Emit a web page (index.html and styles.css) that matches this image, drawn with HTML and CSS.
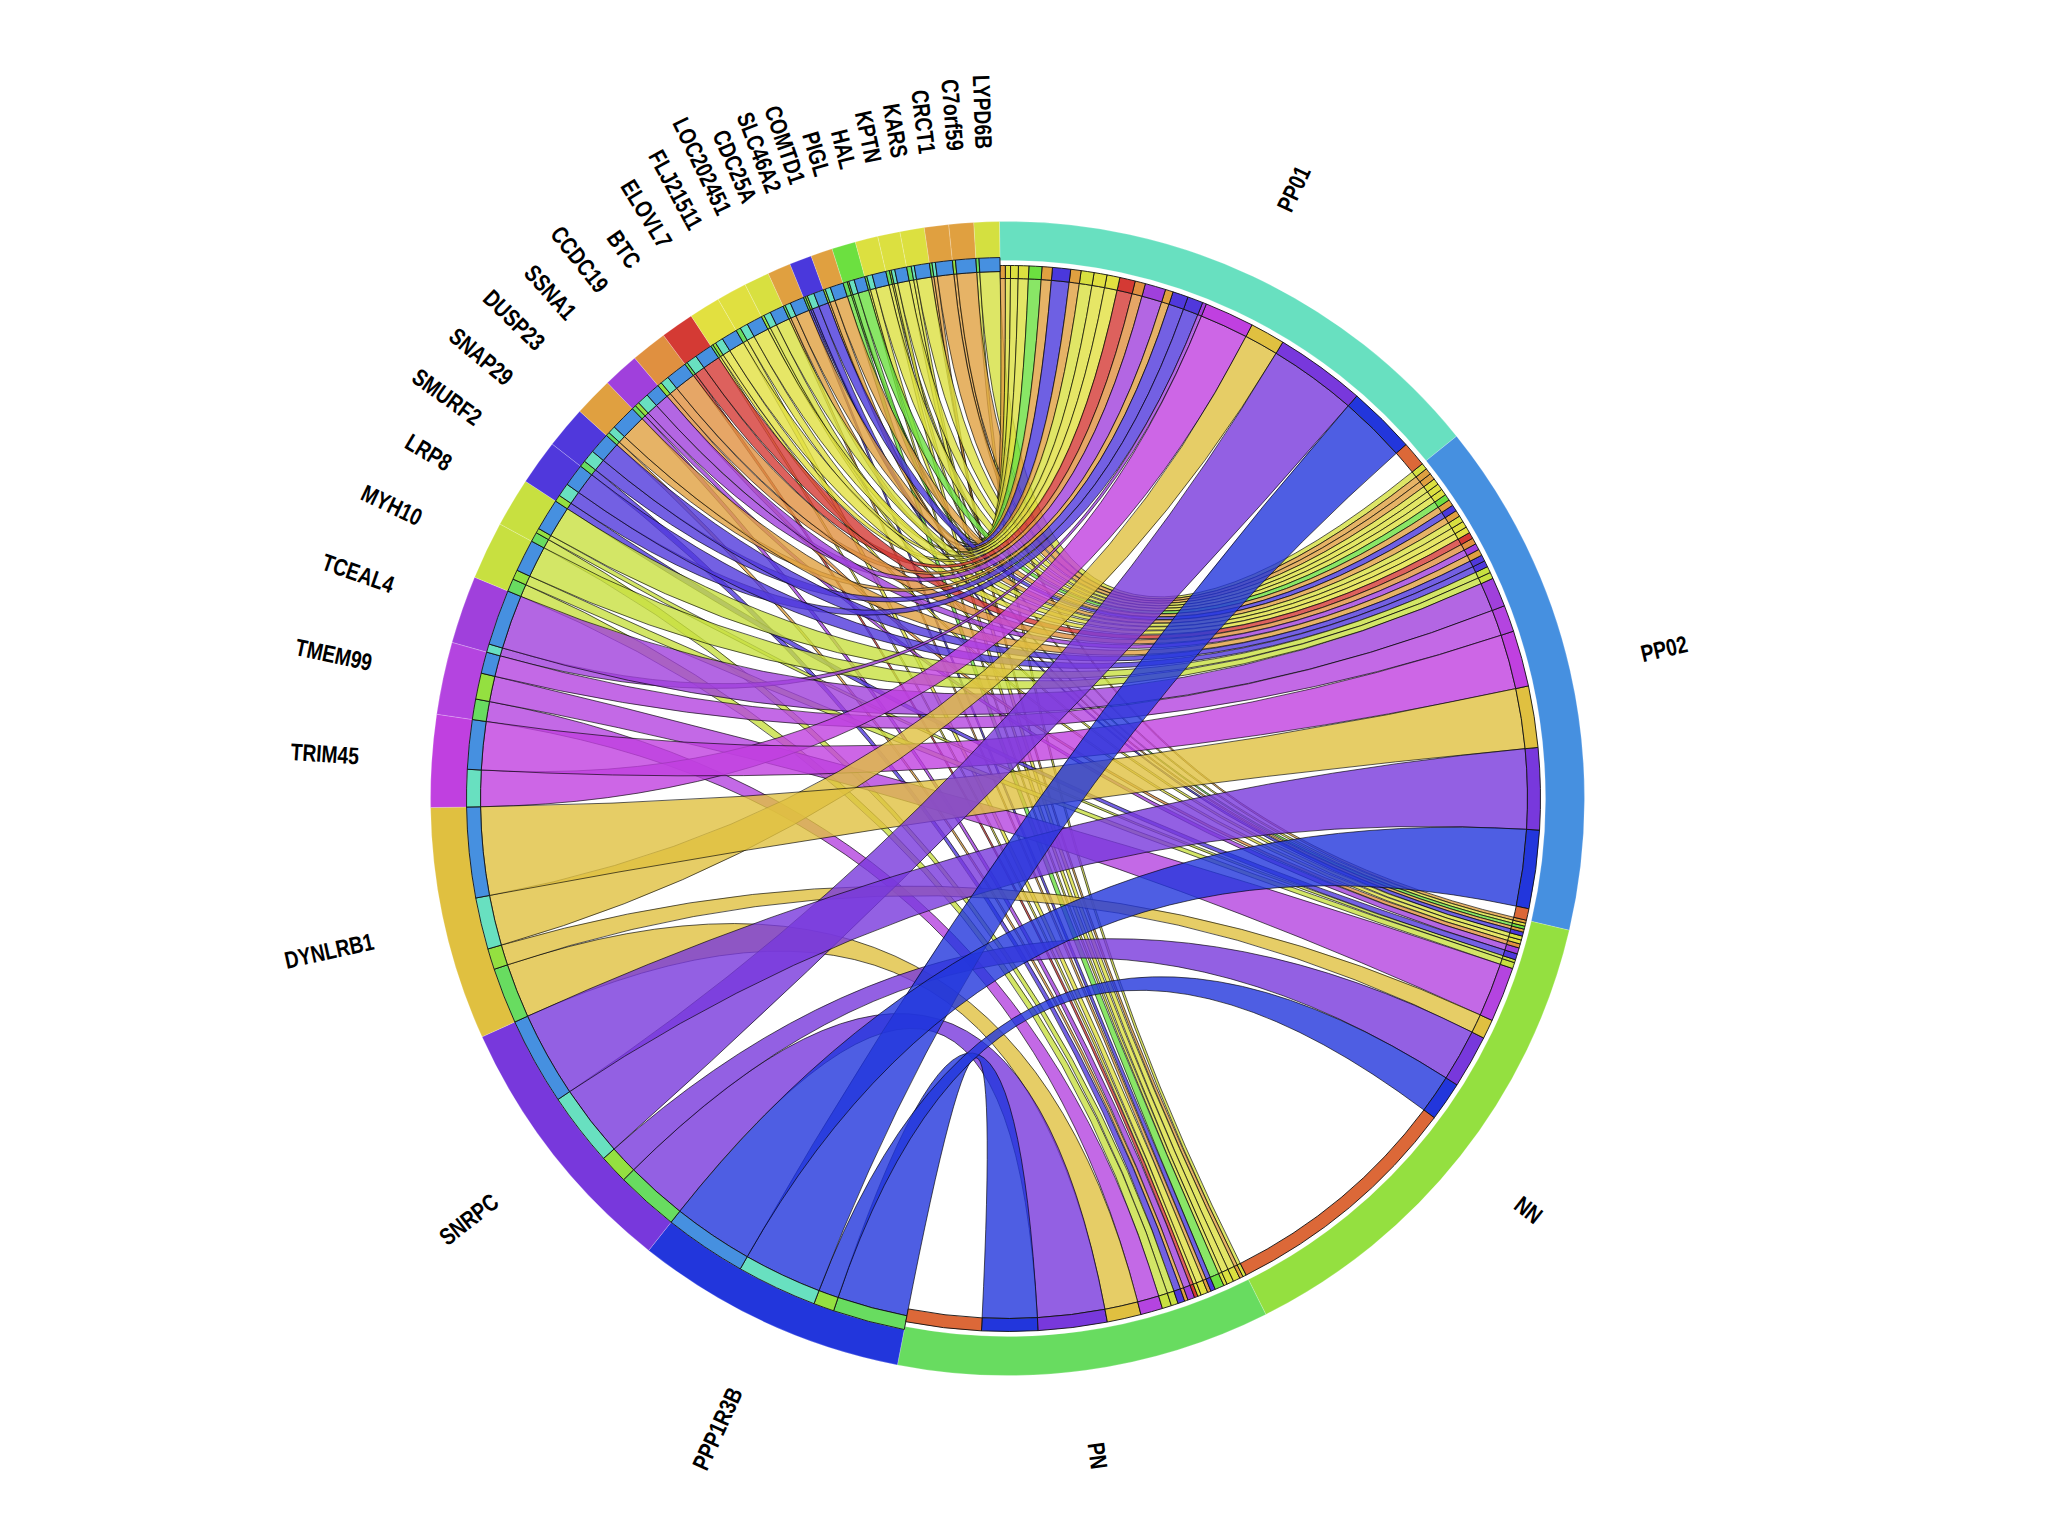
FILE: index.html
```html
<!DOCTYPE html>
<html lang="en">
<head>
<meta charset="utf-8">
<title>Chord diagram</title>
<link rel="stylesheet" href="styles.css">
</head>
<body>
<main class="page">
  <svg class="chart" id="chart" width="2049" height="1537" viewBox="0 0 2049 1537" xmlns="http://www.w3.org/2000/svg">
    <g id="root" transform="translate(1007.5,798.5)">
      <g id="ribbons" class="ribbons"></g>
      <g id="rings" class="rings"></g>
      <g id="labels" class="labels"></g>
    </g>
  </svg>
</main>
<script src="app.js"></script>
</body>
</html>
```

FILE: styles.css
```css
html, body {
  margin: 0;
  padding: 0;
  background: #ffffff;
}

.page {
  display: flex;
  width: 2049px;
  height: 1537px;
  overflow: hidden;
}

.chart {
  display: block;
  width: 2049px;
  height: 1537px;
}

.ring-outer {
  stroke: rgba(255, 255, 255, 0.35);
  stroke-width: 0.6;
}

.ring-inner {
  stroke: #111111;
  stroke-width: 0.9;
}

.ribbon {
  fill-opacity: 0.8;
  stroke: #000000;
  stroke-width: 0.75;
  stroke-opacity: 0.85;
}

.label {
  font-family: "Liberation Sans", Arial, sans-serif;
  font-weight: 700;
  font-size: 24px;
  fill: #000000;
}
```

FILE: app.js
```js
(function () {
  var NS = 'http://www.w3.org/2000/svg';
  var R_OUT = 577, R_GOUT_IN = 541, R_GIN_IN = 527;
  var R_COUT_IN = 538, R_CIN_OUT = 533, R_CIN_IN = 520, R_LABEL = 650;
  var NARROW = 0.8;
  var D = Math.PI / 180;
  var HIDDEN = '#dc6838';
  var CAT_ORDER = ['PN', 'NN', 'PP01', 'PP02'];

  function pt(a, r) { return [r * Math.sin(a * D), -r * Math.cos(a * D)]; }
  function f(n) { return n.toFixed(2); }

  function sector(a0, a1, r0, r1) {
    var large = (a1 - a0) > 180 ? 1 : 0;
    var p0 = pt(a0, r1), p1 = pt(a1, r1), p2 = pt(a1, r0), p3 = pt(a0, r0);
    return 'M' + f(p0[0]) + ',' + f(p0[1]) +
      'A' + r1 + ',' + r1 + ' 0 ' + large + ' 1 ' + f(p1[0]) + ',' + f(p1[1]) +
      'L' + f(p2[0]) + ',' + f(p2[1]) +
      'A' + r0 + ',' + r0 + ' 0 ' + large + ' 0 ' + f(p3[0]) + ',' + f(p3[1]) + 'Z';
  }

  function ribbon(a0, a1, ra, b0, b1, rb) {
    var s0 = pt(a0, ra), s1 = pt(a1, ra), t0 = pt(b0, rb), t1 = pt(b1, rb);
    return 'M' + f(s0[0]) + ',' + f(s0[1]) +
      'A' + ra + ',' + ra + ' 0 0 1 ' + f(s1[0]) + ',' + f(s1[1]) +
      'Q0,0 ' + f(t0[0]) + ',' + f(t0[1]) +
      'A' + rb + ',' + rb + ' 0 0 1 ' + f(t1[0]) + ',' + f(t1[1]) +
      'Q0,0 ' + f(s0[0]) + ',' + f(s0[1]) + 'Z';
  }

  var GENES = [
    ['PPP1R3B', '#2236dc', 191, 218.45, {PN: [191, 198.75], NN: [198.75, 200.96], PP01: [200.96, 209.6], PP02: [209.6, 218.45]}],
    ['SNRPC', '#7838dc', 218.45, 245.6, {PN: [218.45, 225.2], NN: [225.2, 228.3], PP01: [228.3, 236.2], PP02: [236.2, 245.6]}],
    ['DYNLRB1', '#e0c040', 245.6, 269.1, {PN: [245.6, 251.6], NN: [251.6, 253.85], PP01: [253.85, 259.4], PP02: [259.4, 269.1]}],
    ['TRIM45', '#c040e0', 269.1, 278.4, {PP01: [269.1, 273.1], PP02: [273.1, 278.4]}],
    ['TMEM99', '#b444e0', 278.4, 285.7, {PN: [278.4, 280.6], NN: [280.6, 283.4], PP02: [283.4, 285.7]}],
    ['TCEAL4', '#a040dc', 285.7, 292.55, {PP01: 0.15, PP02: 1}],
    ['MYH10', '#c8e040', 292.55, 298.4, {PN: 0.4, NN: 0.3, PP02: 1}],
    ['LRP8', '#c8e040', 298.4, 303.35, {PN: 0.3, NN: 0.15, PP02: 1}],
    ['SMURF2', '#5038dc', 303.35, 307.9, {NN: 0.3, PP01: 0.6, PP02: 1}],
    ['SNAP29', '#5038dc', 307.9, 312.15, {PN: 0.3, PP01: 0.6, PP02: 1}],
    ['DUSP23', '#e0a040', 312.15, 316.1, {PN: 0.15, PP01: 0.3, PP02: 1}],
    ['SSNA1', '#a040dc', 316.1, 319.75, {PN: 0.3, NN: 0.3, PP01: 0.8, PP02: 1}],
    ['CCDC19', '#e09040', 319.75, 323.4, {NN: 0.2, PP01: 0.4, PP02: 1}],
    ['BTC', '#d43a34', 323.4, 326.75, {PN: 0.15, PP01: 0.6, PP02: 1}],
    ['ELOVL7', '#e2e040', 326.75, 329.9, {PN: 0.15, NN: 0.2, PP01: 0.5, PP02: 1}],
    ['FLJ21511', '#e0e040', 329.9, 332.95, {PN: 0.3, PP01: 0.5, PP02: 1}],
    ['LOC202451', '#d8e040', 332.95, 335.5, {NN: 0.2, PP01: 0.5, PP02: 1}],
    ['CDC25A', '#e0a040', 335.5, 337.85, {PN: 0.15, PP01: 0.4, PP02: 1}],
    ['SLC46A2', '#4a38dc', 337.85, 340.1, {PN: 0.2, NN: 0.2, PP01: 0.7, PP02: 1}],
    ['COMTD1', '#e0a040', 340.1, 342.3, {NN: 0.15, PP01: 0.4, PP02: 1}],
    ['PIGL', '#6ce040', 342.3, 344.7, {PN: 0.4, NN: 0.15, PP01: 0.5, PP02: 1}],
    ['HAL', '#dce040', 344.7, 347, {PN: 0.15, PP01: 0.4, PP02: 1}],
    ['KPTN', '#dce040', 347, 349.25, {PN: 0.3, NN: 0.15, PP01: 0.3, PP02: 1}],
    ['KARS', '#dce040', 349.25, 351.7, {PN: 0.3, PP01: 0.2, PP02: 1}],
    ['CRCT1', '#e0a040', 351.7, 354.15, {PN: 0.15, PP01: 0.2, PP02: 1}],
    ['C7orf59', '#e0a040', 354.15, 356.65, {NN: 0.15, PP02: 1}],
    ['LYPD6B', '#d4e040', 356.65, 359.2, {PN: 0.15, PP02: 1}]
  ];

  var CATS = [
    ['PP01', '#68e0c0', -0.8, 51.1, [['*', -0.8, 21.9], ['TRIM45', 21.9, 27.3], ['DYNLRB1', 27.3, 31.1], ['SNRPC', 31.1, 40.95], ['PPP1R3B', 40.95, 48.4], ['#', 48.4, 51.1]]],
    ['PP02', '#4690e0', 51.1, 103.2, [['*', 51.1, 65.6], ['TCEAL4', 65.6, 68.8], ['TMEM99', 68.8, 71.7], ['TRIM45', 71.7, 77.8], ['DYNLRB1', 77.8, 84.5], ['SNRPC', 84.5, 93.4], ['PPP1R3B', 93.4, 101.95], ['#', 101.95, 103.2]]],
    ['NN', '#94e040', 103.2, 153.4, [['*', 103.2, 108.6], ['TMEM99', 108.6, 114.6], ['DYNLRB1', 114.6, 116.7], ['SNRPC', 116.7, 122.5], ['PPP1R3B', 122.5, 126.8], ['#', 126.8, 153.4]]],
    ['PN', '#68dc60', 153.4, 191, [['*', 153.4, 163.1], ['TMEM99', 163.1, 165.5], ['DYNLRB1', 165.5, 169.2], ['SNRPC', 169.2, 176.7], ['PPP1R3B', 176.7, 182.8], ['#', 182.8, 191]]]
  ];

  var catColor = {};
  CATS.forEach(function (c) { catColor[c[0]] = c[1]; });

  var links = [];
  GENES.forEach(function (g) {
    var spec = g[4];
    var explicit = false, total = 0;
    CAT_ORDER.forEach(function (k) {
      if (spec[k] === undefined) return;
      if (Array.isArray(spec[k])) explicit = true; else total += spec[k];
    });
    var a = g[2], span = g[3] - g[2];
    g.links = [];
    CAT_ORDER.forEach(function (k) {
      if (spec[k] === undefined) return;
      var l = {gene: g[0], color: g[1], cat: k};
      if (explicit) {
        l.g0 = spec[k][0]; l.g1 = spec[k][1]; l.w = (l.g1 - l.g0) / 2.5;
      } else {
        var d = span * spec[k] / total;
        l.g0 = a; l.g1 = a + d; a += d; l.w = spec[k];
      }
      g.links.push(l);
      links.push(l);
    });
  });

  CATS.forEach(function (c) {
    var name = c[0], parts = c[4];
    var named = {};
    parts.forEach(function (p) { named[p[0]] = p; });
    var small = [];
    for (var i = GENES.length - 1; i >= 0; i--) {
      GENES[i].links.forEach(function (l) {
        if (l.cat !== name) return;
        if (named[l.gene]) { l.c0 = named[l.gene][1]; l.c1 = named[l.gene][2]; }
        else small.push(l);
      });
    }
    var region = named['*'];
    var tot = 0;
    small.forEach(function (l) { tot += l.w; });
    var a = region[1], span = region[2] - region[1];
    small.forEach(function (l) {
      var d = span * l.w / tot;
      l.c0 = a; l.c1 = a + d; a += d;
    });
  });

  function el(tag, attrs, parent, text) {
    var e = document.createElementNS(NS, tag);
    for (var k in attrs) e.setAttribute(k, attrs[k]);
    if (text !== undefined) e.textContent = text;
    parent.appendChild(e);
    return e;
  }

  var gRib = document.getElementById('ribbons');
  var gRing = document.getElementById('rings');
  var gLab = document.getElementById('labels');

  for (var i = GENES.length - 1; i >= 0; i--) {
    GENES[i].links.forEach(function (l) {
      el('path', {'class': 'ribbon', fill: l.color, d: ribbon(l.g0, l.g1, R_GIN_IN, l.c0, l.c1, R_CIN_IN)}, gRib);
    });
  }

  CATS.forEach(function (c) {
    el('path', {'class': 'ring-outer', fill: c[1], d: sector(c[2], c[3], R_COUT_IN, R_OUT)}, gRing);
  });
  GENES.forEach(function (g) {
    el('path', {'class': 'ring-outer', fill: g[1], d: sector(g[2], g[3], R_GOUT_IN, R_OUT)}, gRing);
  });

  links.forEach(function (l) {
    el('path', {'class': 'ring-inner', fill: catColor[l.cat], d: sector(l.g0, l.g1, R_GIN_IN, R_GOUT_IN)}, gRing);
    el('path', {'class': 'ring-inner', fill: l.color, d: sector(l.c0, l.c1, R_CIN_IN, R_CIN_OUT)}, gRing);
  });
  CATS.forEach(function (c) {
    c[4].forEach(function (p) {
      if (p[0] === '#') el('path', {'class': 'ring-inner', fill: HIDDEN, d: sector(p[1], p[2], R_CIN_IN, R_CIN_OUT)}, gRing);
    });
  });

  function label(name, a0, a1) {
    var m = (a0 + a1) / 2;
    if (m < 0) m += 360;
    var left = m >= 180;
    var tr = 'rotate(' + f(m - 90) + ') translate(' + R_LABEL + ',0)' + (left ? ' rotate(180)' : '') + ' scale(' + NARROW + ',1)';
    el('text', {'class': 'label', transform: tr, dy: '0.35em', 'text-anchor': left ? 'end' : 'start'}, gLab, name);
  }
  CATS.forEach(function (c) { label(c[0], c[2], c[3]); });
  GENES.forEach(function (g) { label(g[0], g[2], g[3]); });
})();
```
